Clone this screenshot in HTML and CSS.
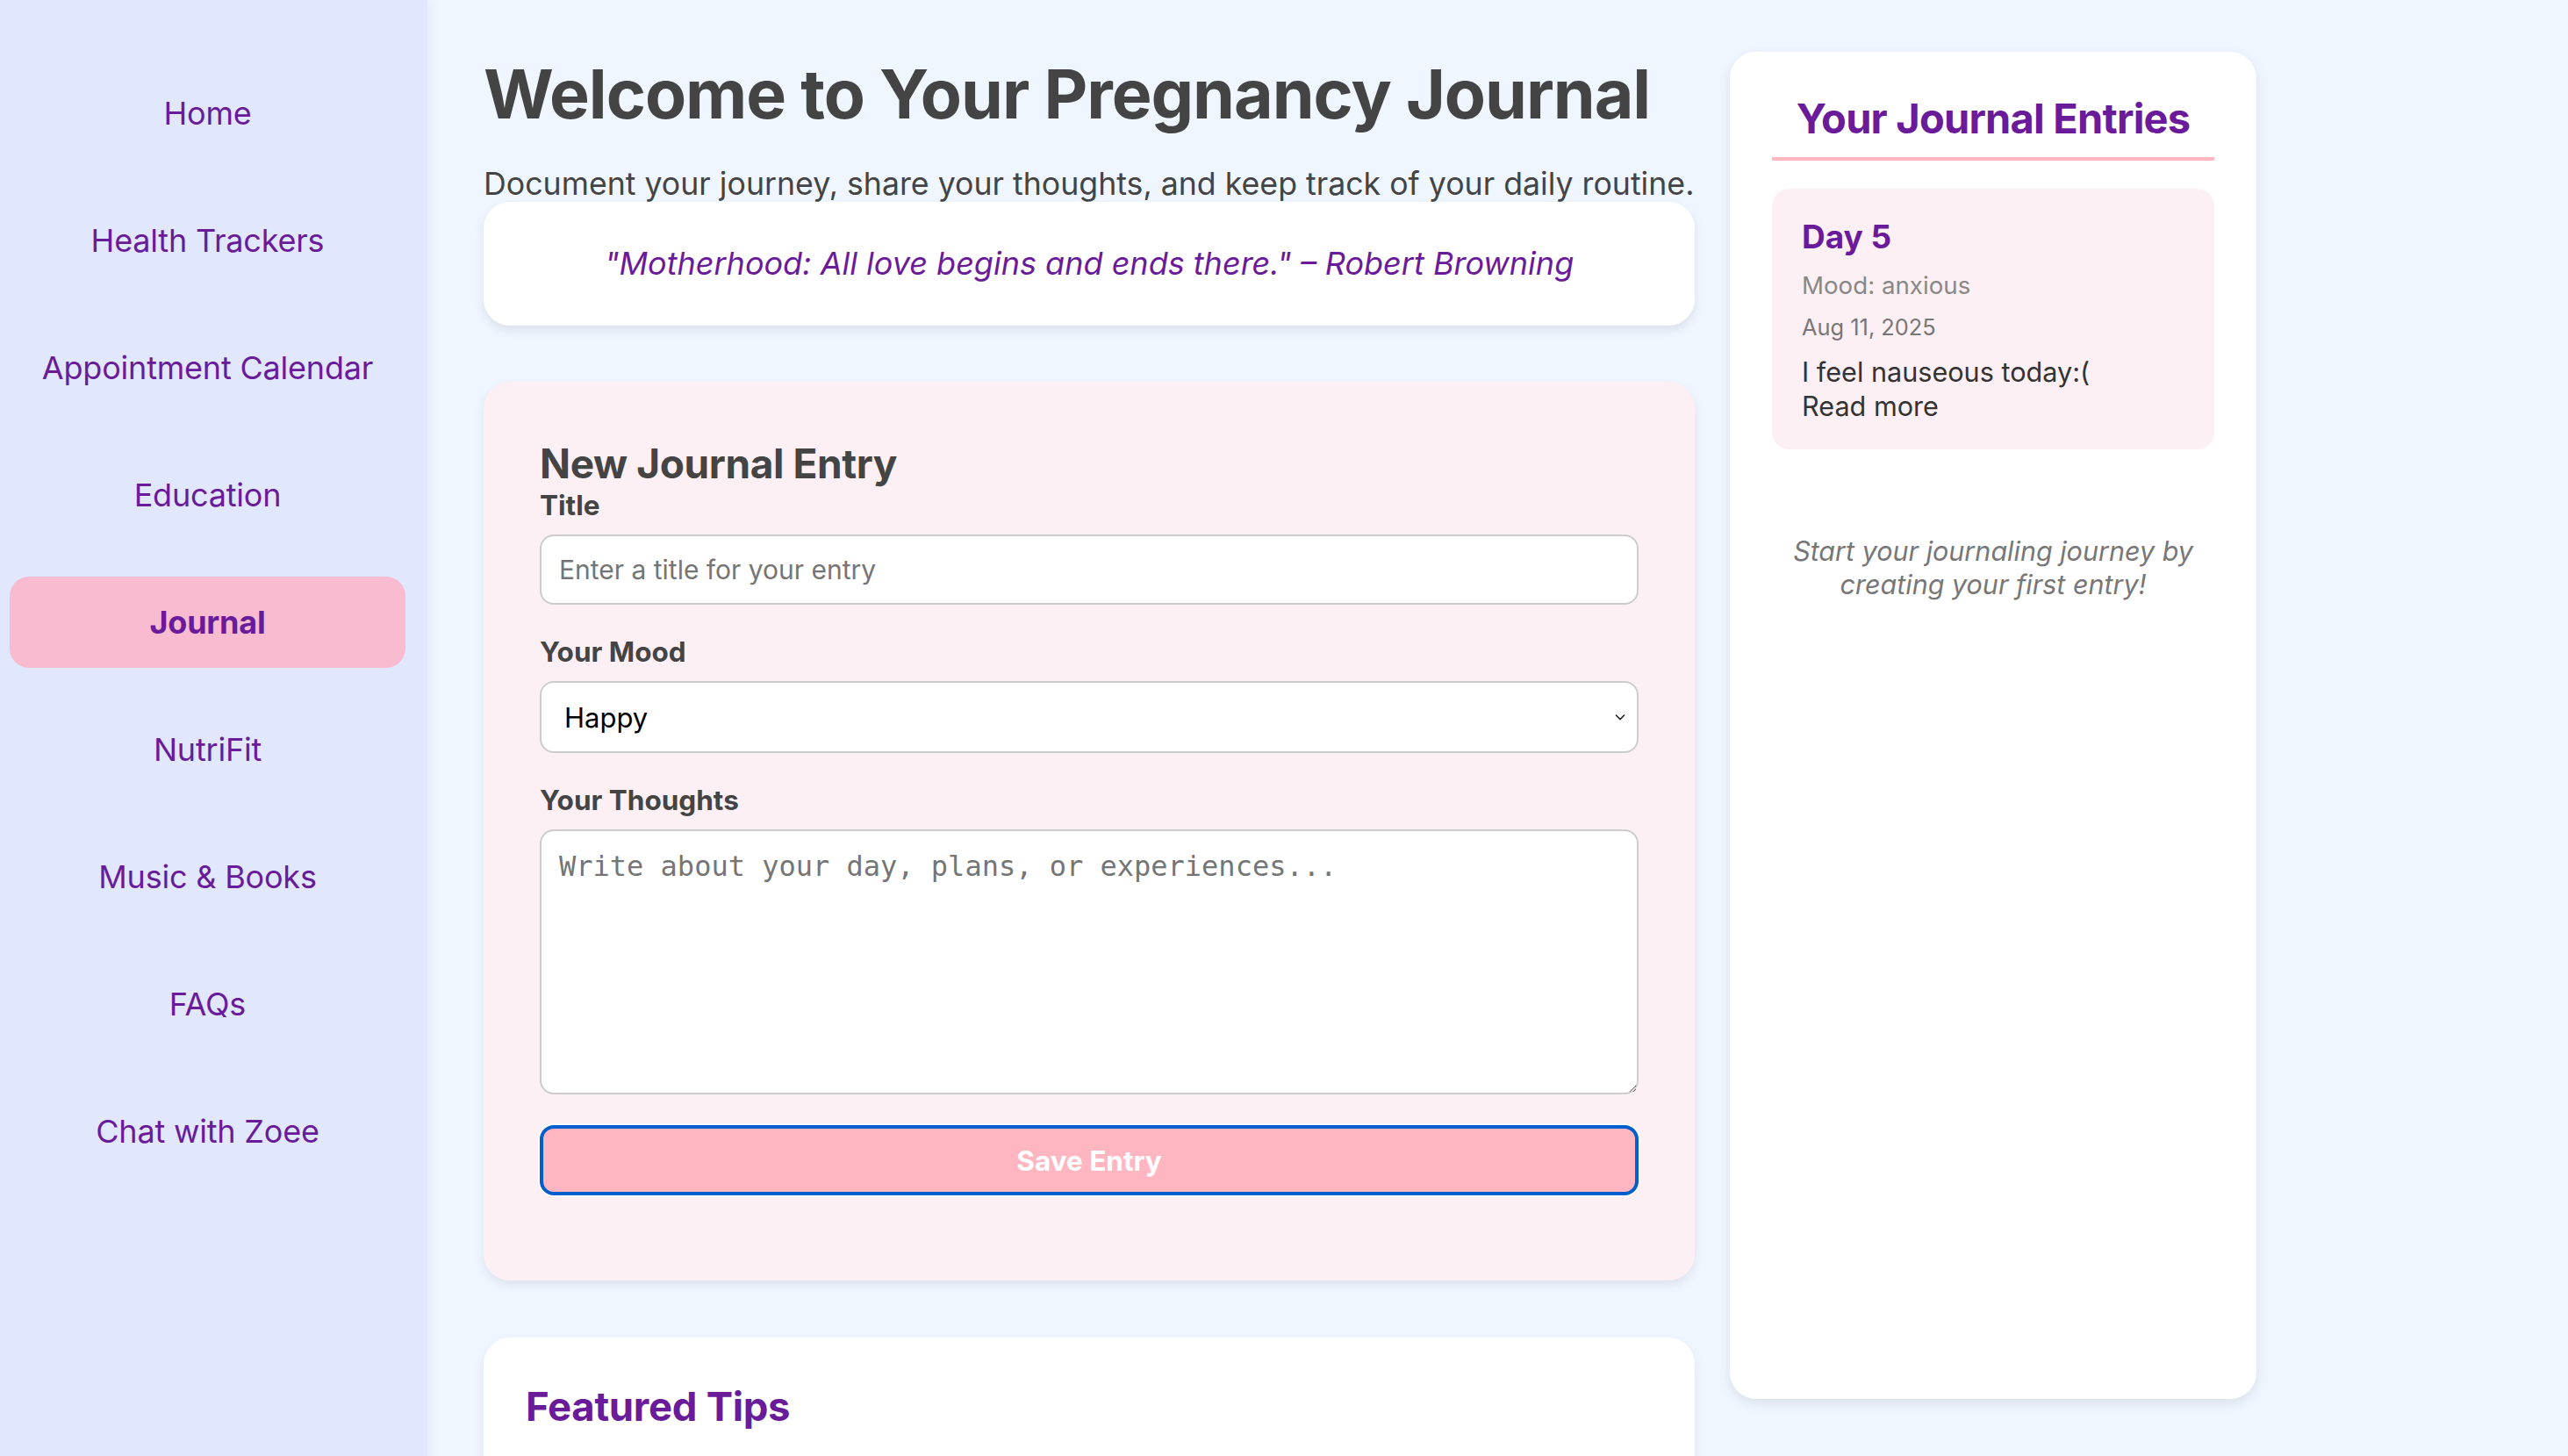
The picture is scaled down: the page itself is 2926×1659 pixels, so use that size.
FILE: index.html
```html
<!DOCTYPE html>
<html lang="en">
<head>
<meta charset="utf-8">
<title>Pregnancy Journal</title>
<link rel="stylesheet" href="styles.css">
</head>
<body>
<aside class="sidebar">
  <nav class="nav">
    <a class="nav-item" href="#">Home</a>
    <a class="nav-item" href="#">Health Trackers</a>
    <a class="nav-item" href="#">Appointment Calendar</a>
    <a class="nav-item" href="#">Education</a>
    <a class="nav-item active" href="#">Journal</a>
    <a class="nav-item" href="#">NutriFit</a>
    <a class="nav-item" href="#">Music &amp; Books</a>
    <a class="nav-item" href="#">FAQs</a>
    <a class="nav-item" href="#">Chat with Zoee</a>
  </nav>
</aside>
<main class="main">
  <section class="content">
    <h1 class="page-title">Welcome to Your Pregnancy Journal</h1>
    <p class="page-subtitle">Document your journey, share your thoughts, and keep track of your daily routine.</p>
    <div class="quote-card">
      <p class="quote">"Motherhood: All love begins and ends there." – Robert Browning</p>
    </div>

    <form class="entry-form">
      <h3 class="form-title">New Journal Entry</h3>
      <div class="form-group">
        <label class="form-label" for="title">Title</label>
        <input class="form-input" id="title" type="text" placeholder="Enter a title for your entry">
      </div>
      <div class="form-group">
        <label class="form-label" for="mood">Your Mood</label>
        <div class="select-wrap">
          <select class="form-select" id="mood">
            <option>Happy</option>
            <option>Calm</option>
            <option>Anxious</option>
            <option>Tired</option>
          </select>
          <svg class="select-arrow" width="14" height="10" viewBox="0 0 14 10"><path d="M2 2.5 L7 7.5 L12 2.5" fill="none" stroke="#222" stroke-width="1.6"/></svg>
        </div>
      </div>
      <div class="form-group">
        <label class="form-label" for="thoughts">Your Thoughts</label>
        <textarea class="form-textarea" id="thoughts" placeholder="Write about your day, plans, or experiences..."></textarea>
      </div>
      <button class="save-btn" type="button">Save Entry</button>
    </form>

    <div class="tips-card">
      <h2 class="tips-title">Featured Tips</h2>
    </div>
  </section>

  <aside class="entries-panel">
    <h2 class="entries-title">Your Journal Entries</h2>
    <div class="entry-card">
      <h4 class="entry-day">Day 5</h4>
      <p class="entry-mood">Mood: anxious</p>
      <p class="entry-date">Aug 11, 2025</p>
      <p class="entry-text">I feel nauseous today:(</p>
      <a class="entry-more" href="#">Read more</a>
    </div>
    <p class="entries-empty">Start your journaling journey by creating your first entry!</p>
  </aside>
</main>
</body>
</html>
```

FILE: styles.css
```css
* { box-sizing: border-box; }

html, body {
  margin: 0;
  padding: 0;
}

body {
  display: flex;
  min-height: 100vh;
  background: #eff6ff;
  font-family: Inter, "Noto Sans", "Liberation Sans", sans-serif;
  color: #444;
}

.sidebar {
  flex: 0 0 487px;
  width: 487px;
  background: #e1e8fe;
  box-shadow: 3px 0 12px rgba(0, 0, 0, 0.05);
  padding: 77px 25px 0 11px;
  position: relative;
  z-index: 1;
}

.nav {
  display: flex;
  flex-direction: column;
  gap: 41px;
}

.nav-item {
  display: flex;
  align-items: center;
  justify-content: center;
  height: 104px;
  border-radius: 22px;
  color: #6a1b9a;
  text-decoration: none;
  font-size: 36px;
  font-weight: 400;
  letter-spacing: -0.2px;
}

.nav-item.active {
  background: #f8bbd0;
  font-weight: 700;
}

.main {
  flex: 1;
  display: flex;
  align-items: flex-start;
  gap: 40px;
  padding: 59px 0 0 64px;
}

.content {
  flex: 0 0 1380px;
  width: 1380px;
  display: flex;
  flex-direction: column;
}

.page-title {
  margin: 0;
  font-size: 77px;
  font-weight: 700;
  color: #444;
  line-height: 97px;
  letter-spacing: -1.05px;
}

.page-subtitle {
  margin: 32px 0 0;
  font-size: 35.7px;
  line-height: 42px;
  color: #444;
  white-space: nowrap;
}

.quote-card {
  background: #fff;
  border-radius: 30px;
  box-shadow: 0 5px 12px rgba(0, 0, 0, 0.09);
  padding: 48px;
  text-align: center;
}

.quote {
  margin: 0;
  font-style: italic;
  font-size: 36px;
  line-height: 45px;
  color: #6a1b9a;
}

.entry-form {
  margin-top: 64px;
  background: #fdf0f4;
  border-radius: 30px;
  box-shadow: 0 5px 12px rgba(0, 0, 0, 0.08);
  padding: 64px 64px 97px;
}

.form-title {
  margin: 0;
  font-size: 46px;
  line-height: 58px;
  font-weight: 700;
  color: #444;
  letter-spacing: -0.4px;
}

.form-group {
  display: flex;
  flex-direction: column;
  margin-bottom: 35px;
}

.form-label {
  font-size: 31.5px;
  line-height: 38px;
  font-weight: 700;
  color: #444;
  margin-bottom: 14px;
}

.form-input,
.form-select,
.form-textarea {
  width: 100%;
  border: 2px solid #cccccc;
  border-radius: 16px;
  background: #fff;
  outline: none;
}

.form-input {
  height: 80px;
  padding: 0 20px;
  font-family: Inter, "Noto Sans", sans-serif;
  font-size: 30px;
  color: #222;
}

.form-input::placeholder {
  color: #757575;
}

.select-wrap {
  position: relative;
}

.form-select {
  height: 82px;
  padding: 0 26px;
  font-family: Inter, "Noto Sans", sans-serif;
  font-size: 31px;
  color: #000;
  appearance: none;
  -webkit-appearance: none;
}

.select-arrow {
  position: absolute;
  right: 14px;
  top: 36px;
}

.form-textarea {
  display: block;
  height: 302px;
  padding: 20px 20px;
  font-family: "DejaVu Sans Mono", "Liberation Mono", monospace;
  font-size: 32px;
  line-height: 40px;
  resize: vertical;
}

.form-textarea::placeholder {
  color: #757575;
}

.save-btn {
  display: block;
  width: 100%;
  height: 80px;
  margin-top: 10px;
  background: #ffb6c1;
  border: 4px solid #005fcc;
  box-shadow: 0 0 0 1.5px #fff;
  border-radius: 16px;
  color: #fff;
  font-family: Inter, "Noto Sans", sans-serif;
  font-size: 31.5px;
  font-weight: 700;
}

.tips-card {
  margin-top: 65px;
  background: #fff;
  border-radius: 30px;
  box-shadow: 0 5px 12px rgba(0, 0, 0, 0.08);
  padding: 50px 48px 48px;
  min-height: 400px;
}

.tips-title {
  margin: 0;
  font-size: 45.5px;
  line-height: 58px;
  font-weight: 700;
  color: #6a1b9a;
  letter-spacing: -0.3px;
}

.entries-panel {
  flex: 0 0 600px;
  width: 600px;
  height: 1535px;
  background: #fff;
  border-radius: 30px;
  box-shadow: 0 5px 14px rgba(0, 0, 0, 0.09);
  padding: 46px 48px;
}

.entries-title {
  margin: 0;
  text-align: center;
  font-size: 47px;
  line-height: 60px;
  font-weight: 700;
  color: #6a1b9a;
  letter-spacing: -0.8px;
  padding-bottom: 14px;
  border-bottom: 4px solid #ffb6c1;
}

.entry-card {
  margin-top: 32px;
  background: #fdf0f4;
  border-radius: 20px;
  padding: 32px 34px 30px;
}

.entry-day {
  margin: 0 0 15px;
  font-size: 37px;
  line-height: 46px;
  font-weight: 700;
  color: #6a1b9a;
}

.entry-mood {
  margin: 0 0 14px;
  font-size: 27.7px;
  line-height: 35px;
  color: #888;
}

.entry-date {
  margin: 0 0 16px;
  font-size: 25.4px;
  line-height: 31px;
  color: #777;
}

.entry-text {
  margin: 0;
  font-size: 30.6px;
  line-height: 39px;
  color: #333;
}

.entry-more {
  display: block;
  font-size: 30.6px;
  line-height: 39px;
  color: #333;
  text-decoration: none;
}

.entries-empty {
  margin: 97px 0 0;
  padding: 0 10px;
  text-align: center;
  font-style: italic;
  font-size: 30.5px;
  line-height: 38px;
  color: #777;
}
```
